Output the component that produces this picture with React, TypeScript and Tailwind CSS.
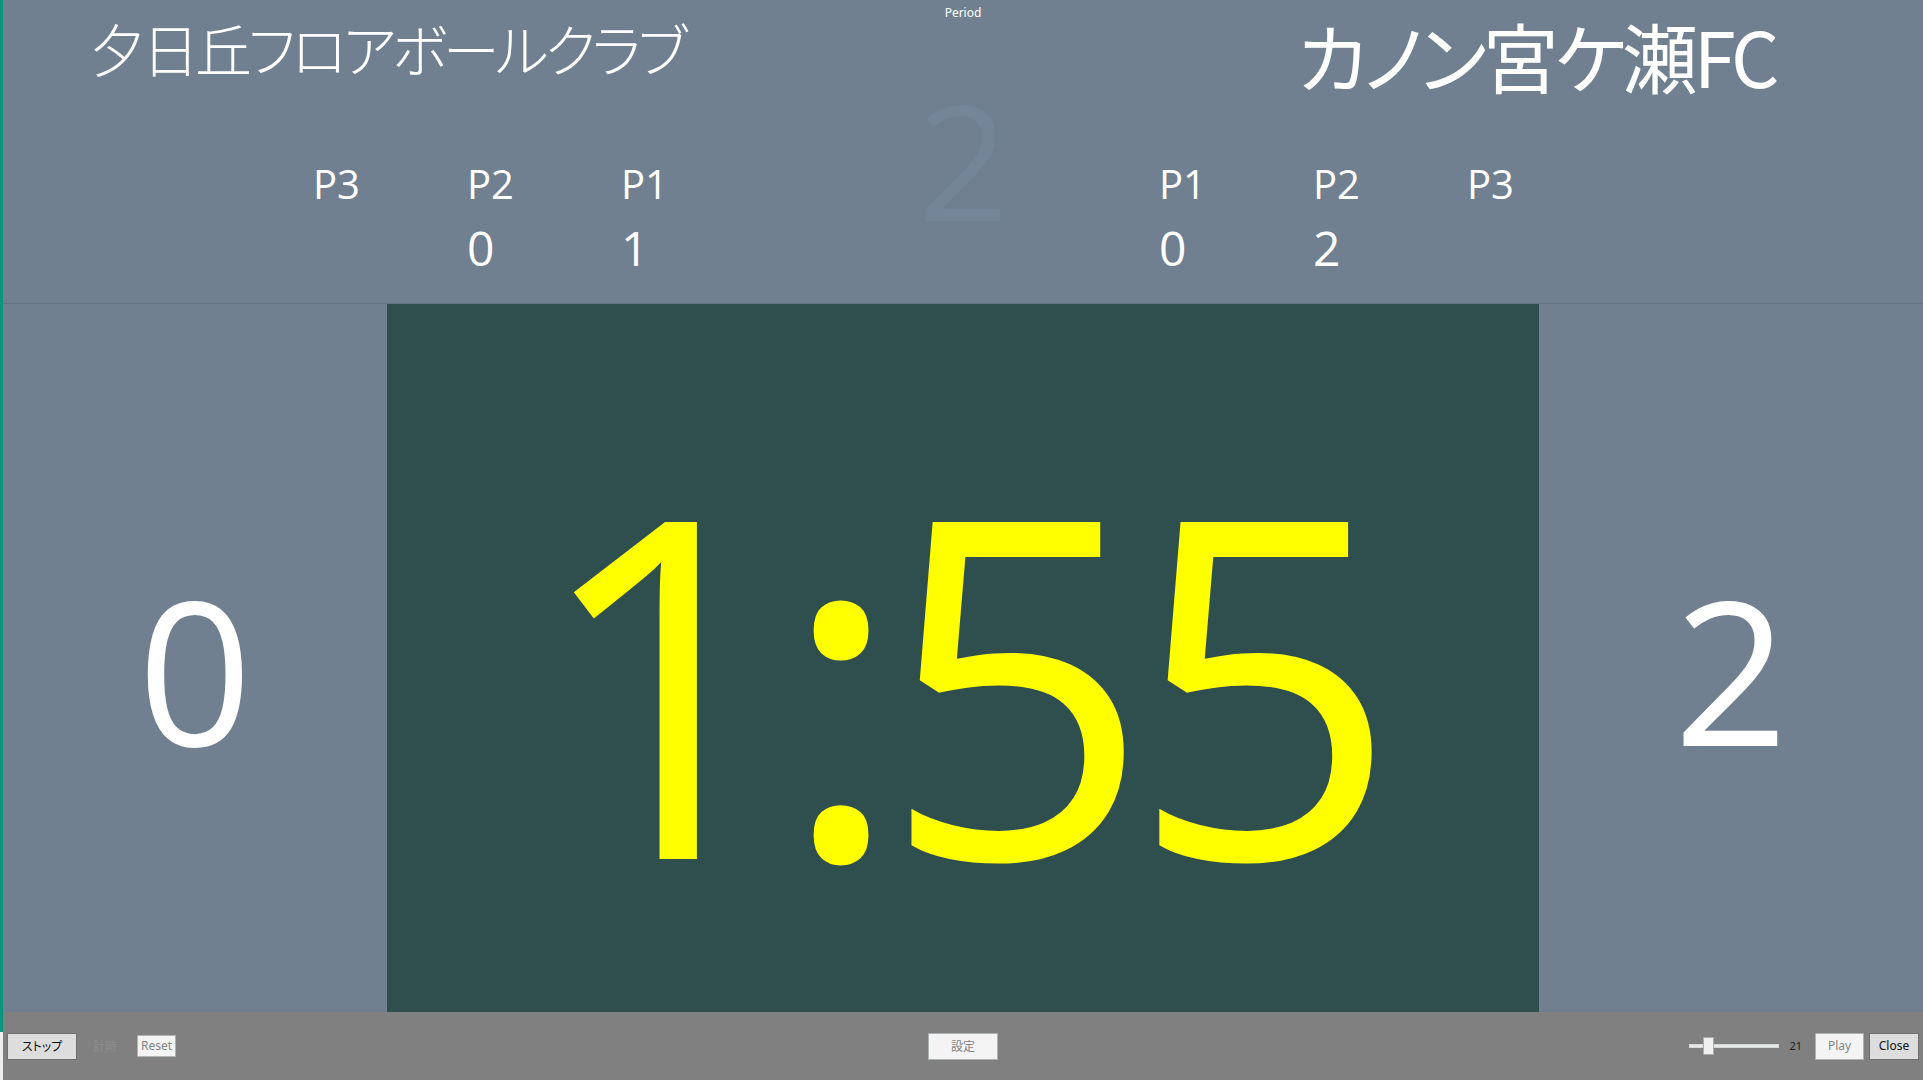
import React from "react";

const latin = { fontFamily: '"Open Sans", "Noto Sans", "Noto Sans CJK JP", sans-serif' };
const jp = { fontFamily: '"Noto Sans CJK JP", "Noto Sans", sans-serif', fontFeatureSettings: '"palt"' };
const ui = { fontFamily: '"Noto Sans", "Noto Sans CJK JP", sans-serif' };

function PeriodCol({ label, value }: { label: string; value?: string }) {
  return (
    <div className="w-[154px] flex flex-col text-white" style={latin}>
      <div className="text-[40px] leading-[48px] h-[48px]">{label}</div>
      <div className="text-[48px] leading-[56px] h-[56px] mt-[12px]">{value ?? ""}</div>
    </div>
  );
}

export default function App() {
  return (
    <div className="w-[1923px] h-[1080px] flex overflow-hidden bg-[#708090]">
      <div className="w-[3px] flex flex-col">
        <div className="h-[1032px] bg-[#0c957d]" />
        <div className="flex-1 bg-[#eeeeee]" />
      </div>
      <div className="flex-1 flex flex-col">
        {/* top */}
        <div className="h-[304px] border-b border-[#64727f] bg-[#708090] grid grid-cols-[776px_368px_776px]">
          <div className="flex flex-col">
            <div className="pl-[86px] pt-[12px] h-[160px] text-white text-[57px] leading-[70px] font-light tracking-[-4px] whitespace-nowrap" style={jp}>
              夕日丘フロアボールクラブ
            </div>
            <div className="flex pl-[310px]">
              <PeriodCol label="P3" />
              <PeriodCol label="P2" value="0" />
              <PeriodCol label="P1" value="1" />
            </div>
          </div>
          <div className="flex flex-col items-center">
            <div className="text-white text-[12px] leading-[16px] mt-[5px]" style={ui}>Period</div>
            <div className="text-[#758598] text-[160px] leading-[1] mt-[58px]" style={latin}>2</div>
          </div>
          <div className="flex flex-col">
            <div className="pl-[150px] pt-[10px] h-[160px] text-white text-[76px] leading-[90px] tracking-[-4px] whitespace-nowrap" style={jp}>
              カノン宮ケ瀬FC
            </div>
            <div className="flex pl-[12px]">
              <PeriodCol label="P1" value="0" />
              <PeriodCol label="P2" value="2" />
              <PeriodCol label="P3" />
            </div>
          </div>
        </div>
        {/* middle */}
        <div className="h-[708px] flex">
          <div className="w-[384px] flex items-center justify-center pt-[22px] text-white text-[200px] leading-none" style={latin}>
            0
          </div>
          <div className="w-[1152px] bg-[#2f4f4f] flex items-center justify-center pt-[36px] pr-[18px] text-[#ffff00] text-[472px] leading-none tracking-[-22px]" style={latin}>
            1:55
          </div>
          <div className="flex-1 flex items-center justify-center pt-[22px] text-white text-[200px] leading-none" style={latin}>
            2
          </div>
        </div>
        {/* bottom bar */}
        <div className="flex-1 bg-[#808080] grid grid-cols-[1fr_auto_1fr] items-center" style={ui}>
          <div className="flex items-center">
            <button className="ml-[4px] w-[70px] h-[27px] bg-[#dddddd] border border-[#707070] text-[12px] text-[#111] leading-none" style={jp}>ストップ</button>
            <span className="ml-[16px] text-[12px] text-[#8e8e8e]" style={jp}>計時</span>
            <button className="ml-[20px] w-[39px] h-[22px] bg-[#f4f4f4] border border-[#adb2b5] text-[12px] text-[#838383] leading-none">Reset</button>
          </div>
          <div>
            <button className="w-[70px] h-[27px] bg-[#f4f4f4] border border-[#adb2b5] text-[12px] text-[#838383] leading-none" style={jp}>設定</button>
          </div>
          <div className="flex items-center justify-end">
            <div className="relative w-[90px] h-[18px] flex items-center">
              <div className="w-full h-[4px] bg-[#e7eaea] border border-[#d6d6d6]" />
              <div className="absolute left-[14px] top-0 w-[11px] h-[18px] bg-[#f0f0f0] border border-[#acacac]" />
            </div>
            <span className="ml-[10px] text-[11px] text-[#1e1e1e]">21</span>
            <button className="ml-[13px] w-[49px] h-[27px] bg-[#f4f4f4] border border-[#adb2b5] text-[12px] text-[#838383] leading-none">Play</button>
            <button className="ml-[5px] mr-[4px] w-[50px] h-[27px] bg-[#dddddd] border border-[#707070] text-[12px] text-[#111] leading-none">Close</button>
          </div>
        </div>
      </div>
    </div>
  );
}
